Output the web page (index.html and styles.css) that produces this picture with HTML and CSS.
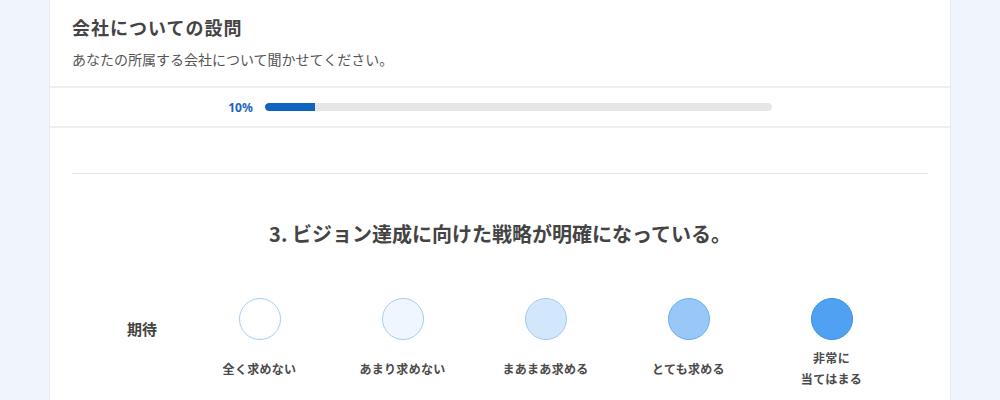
FILE: index.html
```html
<!DOCTYPE html>
<html lang="ja">
<head>
    <meta charset="UTF-8">
    <meta name="viewport" content="width=device-width, initial-scale=1.0">
    <title>会社についての設問</title>
    <link rel="stylesheet" href="styles.css">
</head>
<body>
    <div class="survey-card">
        <div class="survey-header">
            <h1>会社についての設問</h1>
            <p>あなたの所属する会社について聞かせてください。</p>
        </div>

        <div class="progress-row">
            <span class="progress-label">10%</span>
            <div class="progress-bar">
                <div class="progress-fill" style="width: 10%"></div>
            </div>
        </div>

        <div class="question">
            <h2 class="question-title">3. ビジョン達成に向けた戦略が明確になっている。</h2>

            <div class="scale-row">
                <div class="scale-label">期待</div>
                <div class="scale-option">
                    <span class="dot dot-1"></span>
                    <span class="option-text">全く求めない</span>
                </div>
                <div class="scale-option">
                    <span class="dot dot-2"></span>
                    <span class="option-text">あまり求めない</span>
                </div>
                <div class="scale-option">
                    <span class="dot dot-3"></span>
                    <span class="option-text">まあまあ求める</span>
                </div>
                <div class="scale-option">
                    <span class="dot dot-4"></span>
                    <span class="option-text">とても求める</span>
                </div>
                <div class="scale-option">
                    <span class="dot dot-5"></span>
                    <span class="option-text">非常に<br>当てはまる</span>
                </div>
            </div>
        </div>
    </div>
</body>
</html>
```

FILE: styles.css
```css
* {
    margin: 0;
    padding: 0;
    box-sizing: border-box;
}

body {
    font-family: "Noto Sans CJK JP", "Noto Sans", sans-serif;
    background: #f0f5fd;
    color: #444;
    height: 400px;
    overflow: hidden;
}

.survey-card {
    background: white;
    width: 902px;
    margin: 0 auto;
    border-left: 1px solid #e6e8ee;
    border-right: 1px solid #e6e8ee;
    min-height: 400px;
}

.survey-header {
    padding: 14px 22px 16px;
    border-bottom: 2px solid #eeeeee;
}

.survey-header h1 {
    font-size: 18px;
    line-height: 26px;
    font-weight: 700;
    letter-spacing: 1px;
    color: #444;
}

.survey-header p {
    margin-top: 8px;
    font-size: 14px;
    line-height: 22px;
    color: #555;
}

.progress-row {
    height: 40px;
    display: flex;
    align-items: center;
    justify-content: center;
    gap: 12px;
    border-bottom: 2px solid #eeeeee;
}

.progress-label {
    font-family: "Noto Sans", sans-serif;
    font-size: 12px;
    font-weight: 700;
    color: #1565c0;
}

.progress-bar {
    width: 507px;
    height: 8px;
    background: #e6e6e6;
    border-radius: 4px;
    overflow: hidden;
}

.progress-fill {
    height: 100%;
    background: #0f64c0;
    border-radius: 4px 0 0 4px;
}

.question {
    margin: 45px 22px 0;
    border-top: 1px solid #e6e6e6;
}

.question-title {
    margin-top: 45px;
    text-align: center;
    font-size: 20px;
    line-height: 30px;
    font-weight: 700;
    color: #444;
}

.scale-row {
    display: flex;
    margin-top: 49px;
}

.scale-label {
    width: 116px;
    padding-left: 24px;
    padding-top: 20px;
    text-align: center;
    font-size: 15px;
    line-height: 22px;
    font-weight: 700;
}

.scale-option {
    width: 143px;
    display: flex;
    flex-direction: column;
    align-items: center;
}

.dot {
    width: 42px;
    height: 42px;
    border-radius: 50%;
    border: 1.5px solid #a3cdf8;
    background: white;
}

.dot-2 { background: #f0f6fe; }
.dot-3 { background: #d3e7fb; border-color: #a0cbf6; }
.dot-4 { background: #99c7f7; border-color: #68aef3; }
.dot-5 { background: #50a1f1; border-color: #3690ea; }

.option-text {
    margin-top: 7px;
    height: 42px;
    display: flex;
    align-items: center;
    text-align: center;
    font-size: 12px;
    line-height: 21px;
    font-weight: 700;
    letter-spacing: 0.3px;
    color: #4a4a4a;
}
```
